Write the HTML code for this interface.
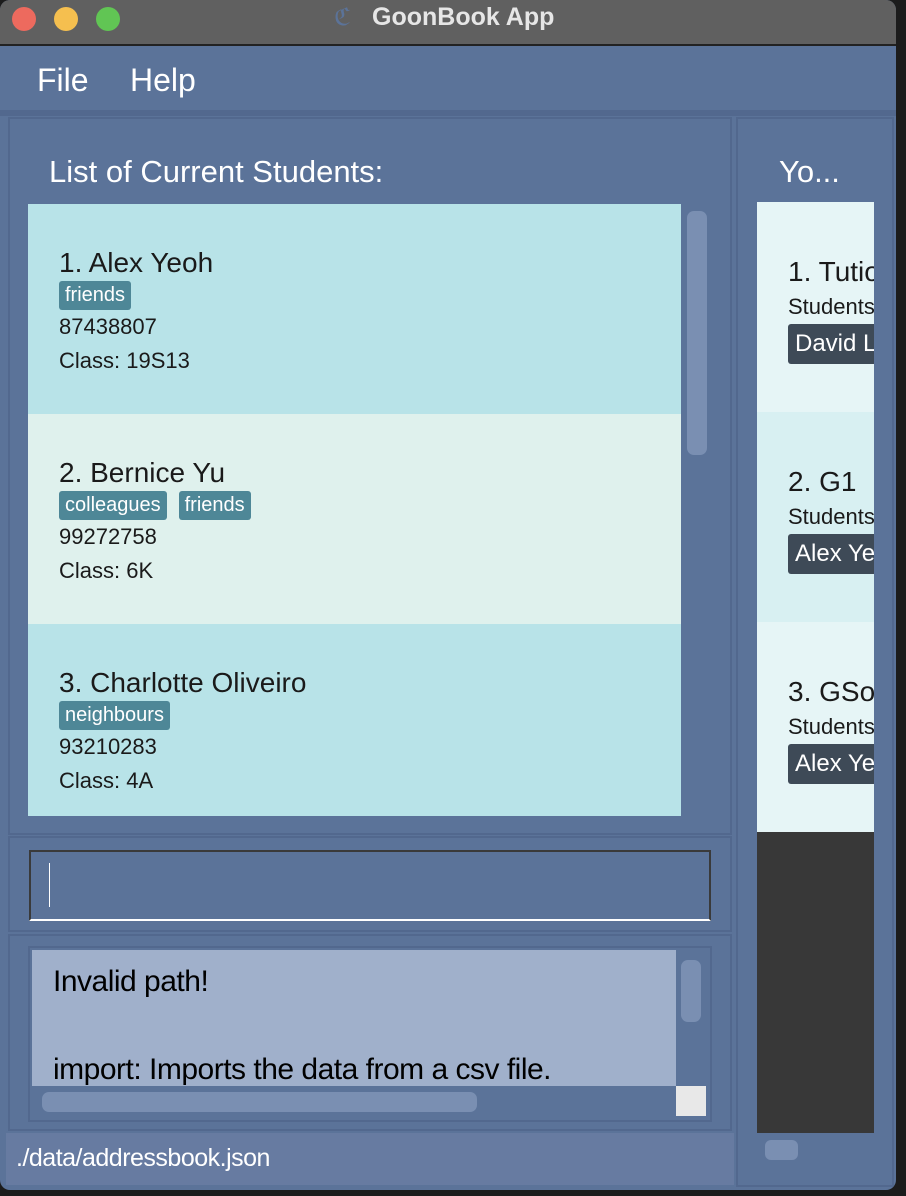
<!DOCTYPE html>
<html><head><meta charset="utf-8"><style>
*{margin:0;padding:0;box-sizing:border-box}
body{width:906px;height:1196px;background:#1c1c1c;position:relative;overflow:hidden;font-family:"Liberation Sans",sans-serif}
.a{position:absolute}
.win{left:0;top:0;width:896px;height:1190px;background:#5b7399;border-radius:10px;overflow:hidden}
.title{left:0;top:0;width:896px;height:46px;background:#606060;border-bottom:2px solid #222}
.dot{top:7px;width:24px;height:24px;border-radius:50%}
.card{left:0;width:653px;height:210px;padding:41px 0 0 31px;color:#1a1a1a}
.nm{font-size:28px;line-height:36px}
.tag{display:inline-block;background:#4e8797;color:#fff;font-size:20px;line-height:29px;padding:0 6px;border-radius:3px;margin-right:12px}
.ln{font-size:22px;line-height:34px}
.rc{left:0;width:117px;height:210px;padding:52px 0 0 31px;color:#1a1a1a;overflow:hidden;white-space:nowrap}
.rt{display:inline-block;background:#3e4a57;color:#fff;font-size:24px;line-height:40px;padding:0 7px;border-radius:3px}
</style></head><body>
<div class="a win">
<div class="a title"></div>
<div class="a dot" style="left:12px;background:#ed6a5e"></div>
<div class="a dot" style="left:54px;background:#f5bf4f"></div>
<div class="a dot" style="left:96px;background:#61c554"></div>
<div class="a" style="left:334px;top:3px;color:#5b7399;font-family:'Liberation Serif',serif;font-size:24px">ℭ</div>
<div class="a" style="left:372px;top:3px;color:#e6e6e6;font-size:25px;font-weight:bold">GoonBook App</div>
<div class="a" style="left:37px;top:62px;color:#fff;font-size:32px">File</div>
<div class="a" style="left:130px;top:62px;color:#fff;font-size:32px">Help</div>
<div class="a" style="left:0;top:110px;width:896px;height:6px;background:#52688e"></div>
<div class="a" style="left:8px;top:117px;width:724px;height:718px;border:2px solid #52688e"></div>
<div class="a" style="left:49px;top:154px;color:#fff;font-size:31px">List of Current Students:</div>
<div class="a" style="left:28px;top:204px;width:653px;height:612px;overflow:hidden">
<div class="a card" style="top:0;background:#b8e3e8"><div class="nm">1. Alex Yeoh</div><span class="tag">friends</span><div class="ln">87438807</div><div class="ln">Class: 19S13</div></div>
<div class="a card" style="top:210px;background:#dff1ed"><div class="nm">2. Bernice Yu</div><span class="tag">colleagues</span><span class="tag">friends</span><div class="ln">99272758</div><div class="ln">Class: 6K</div></div>
<div class="a card" style="top:420px;background:#b8e3e8"><div class="nm">3. Charlotte Oliveiro</div><span class="tag">neighbours</span><div class="ln">93210283</div><div class="ln">Class: 4A</div></div>
</div>
<div class="a" style="left:687px;top:211px;width:20px;height:244px;background:#7a8fb2;border-radius:7px"></div>
<div class="a" style="left:8px;top:836px;width:724px;height:96px;border:2px solid #52688e"></div>
<div class="a" style="left:29px;top:850px;width:682px;height:71px;border:2px solid #3a3a3a;border-bottom:2px solid #fff"></div>
<div class="a" style="left:49px;top:863px;width:1px;height:44px;background:#fff"></div>
<div class="a" style="left:8px;top:934px;width:724px;height:197px;border:2px solid #52688e"></div>
<div class="a" style="left:28px;top:946px;width:684px;height:176px;border:2px solid #52688e"></div>
<div class="a" style="left:32px;top:950px;width:644px;height:136px;background:#a0b0cb;color:#000;font-size:30px;padding:10px 0 0 21px;letter-spacing:-0.5px;line-height:44px;overflow:hidden">Invalid path!<br><br>import: Imports the data from a csv file.</div>
<div class="a" style="left:681px;top:960px;width:20px;height:62px;background:#7a8fb2;border-radius:7px"></div>
<div class="a" style="left:42px;top:1092px;width:435px;height:20px;background:#7a8fb2;border-radius:7px"></div>
<div class="a" style="left:676px;top:1086px;width:30px;height:30px;background:#e8e8e8"></div>
<div class="a" style="left:6px;top:1133px;width:728px;height:52px;background:#677ba1;color:#fff;font-size:25px;padding:11px 0 0 10px;letter-spacing:-0.5px">./data/addressbook.json</div>
<div class="a" style="left:736px;top:117px;width:158px;height:1070px;border:2px solid #52688e"></div>
<div class="a" style="left:779px;top:154px;color:#fff;font-size:31px">Yo...</div>
<div class="a" style="left:757px;top:202px;width:117px;height:931px;background:#383838;overflow:hidden">
<div class="a rc" style="top:0;background:#e6f5f6"><div class="nm">1. Tution</div><div class="ln">Students</div><span class="rt">David Li</span></div>
<div class="a rc" style="top:210px;background:#d8f0f2"><div class="nm">2. G1</div><div class="ln">Students</div><span class="rt">Alex Yeoh</span></div>
<div class="a rc" style="top:420px;background:#e6f5f6"><div class="nm">3. GSoc</div><div class="ln">Students</div><span class="rt">Alex Yeoh</span></div>
</div>
<div class="a" style="left:765px;top:1140px;width:33px;height:20px;background:#7a8fb2;border-radius:6px"></div>
</div>
</body></html>
